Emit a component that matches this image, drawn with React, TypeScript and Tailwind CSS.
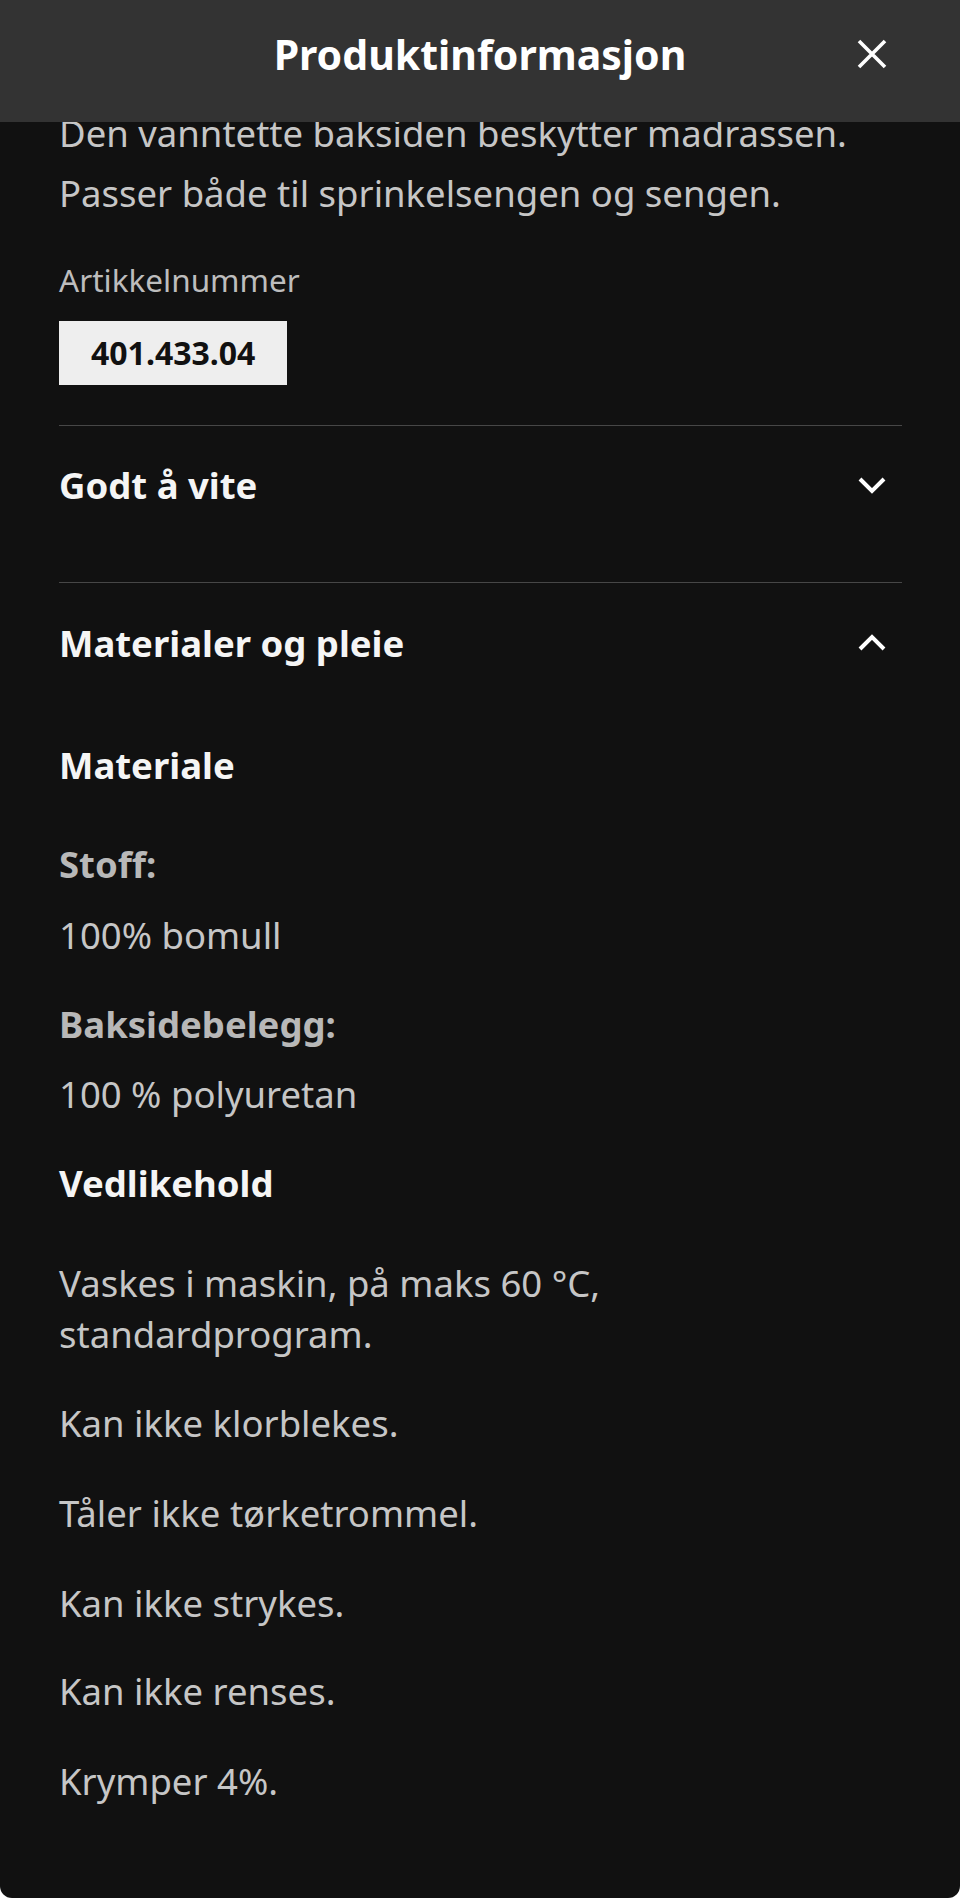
import React from "react";

function Chevron({ up }: { up?: boolean }) {
  return (
    <svg width="28" height="18" viewBox="0 0 28 18" className="mr-[16px] shrink-0" aria-hidden="true">
      <path
        d={up ? "M2 15 L14 3 L26 15" : "M2 3 L14 15 L26 3"}
        fill="none"
        stroke="#ffffff"
        strokeWidth="4"
        strokeLinejoin="miter"
      />
    </svg>
  );
}

export default function App() {
  return (
    <div className="bg-white min-h-[1898px] font-['Noto_Sans',sans-serif]">
      <div className="relative bg-[#111111] h-[1898px] rounded-b-[12px] overflow-hidden">
        <header className="absolute inset-x-0 top-0 h-[122px] bg-[#333333] z-10 pt-[29px]">
          <div className="relative h-[50px] flex items-center justify-center">
            <h1 className="text-[41px] leading-[50px] font-bold text-white">Produktinformasjon</h1>
            <button className="absolute right-[73px] top-[10px] w-[30px] h-[30px]" aria-label="Lukk">
              <svg width="30" height="30" viewBox="0 0 30 30">
                <path d="M2 2 L28 28 M28 2 L2 28" stroke="#ffffff" strokeWidth="3.6" fill="none" />
              </svg>
            </button>
          </div>
        </header>

        <main className="pt-[103px] pl-[59px] pr-[58px]">
          <p className="text-[36.5px] leading-[60px] text-[#c6c6c6]">
            <span className="block">Den vanntette baksiden beskytter madrassen.</span>
            <span className="block">Passer både til sprinkelsengen og sengen.</span>
          </p>

          <div className="mt-[37px] text-[31.5px] leading-[40px] text-[#bdbdbd]">Artikkelnummer</div>
          <div className="mt-[21px] inline-flex items-center h-[64px] px-[32px] bg-[#eeeeee] text-[#111111] font-bold text-[32px]">
            401.433.04
          </div>

          <div className="mt-[40px] border-t border-[#474747]">
            <div className="pt-[34px] pb-[72px] flex items-center justify-between">
              <h2 className="text-[36.5px] leading-[50px] font-bold text-[#f5f5f5]">Godt å vite</h2>
              <Chevron />
            </div>
          </div>

          <div className="border-t border-[#474747]">
            <div className="pt-[35px] flex items-center justify-between">
              <h2 className="text-[36.5px] leading-[50px] font-bold text-[#f5f5f5]">Materialer og pleie</h2>
              <Chevron up />
            </div>

            <div className="text-[36.5px] leading-[50px]">
              <h3 className="mt-[72px] font-bold text-[#f5f5f5]">Materiale</h3>
              <div className="mt-[49px] font-bold text-[#b8b8b8]">Stoff:</div>
              <div className="mt-[21px] text-[#c6c6c6]">100% bomull</div>
              <div className="mt-[39px] font-bold text-[#b8b8b8]">Baksidebelegg:</div>
              <div className="mt-[20px] text-[#c6c6c6]">100 % polyuretan</div>
              <h3 className="mt-[39px] font-bold text-[#f5f5f5]">Vedlikehold</h3>
              <p className="mt-[50px] leading-[51px] text-[#c6c6c6]">
                Vaskes i maskin, på maks 60 °C,
                <br />
                standardprogram.
              </p>
              <p className="mt-[38px] text-[#c6c6c6]">Kan ikke klorblekes.</p>
              <p className="mt-[40px] text-[#c6c6c6]">Tåler ikke tørketrommel.</p>
              <p className="mt-[40px] text-[#c6c6c6]">Kan ikke strykes.</p>
              <p className="mt-[38px] text-[#c6c6c6]">Kan ikke renses.</p>
              <p className="mt-[40px] text-[#c6c6c6]">Krymper 4%.</p>
            </div>
          </div>
        </main>
      </div>
    </div>
  );
}
